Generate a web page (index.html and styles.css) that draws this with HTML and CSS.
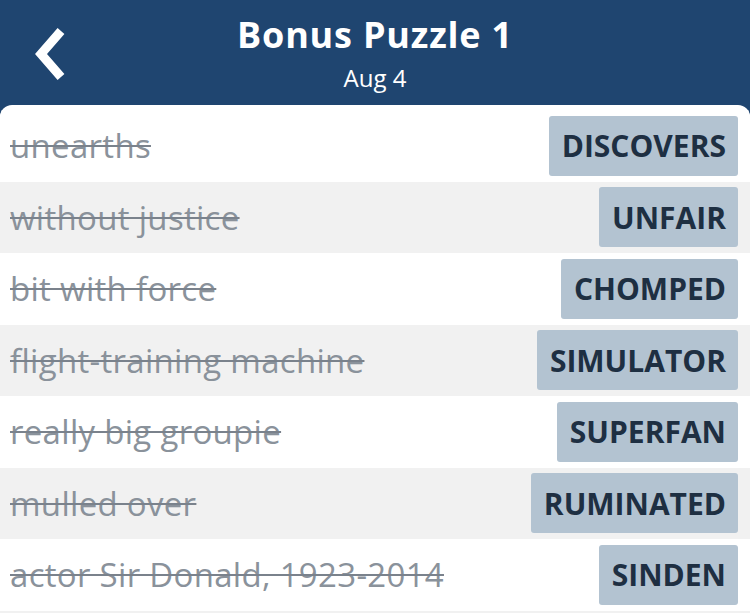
FILE: index.html
```html
<!DOCTYPE html>
<html>
<head>
<meta charset="utf-8">
<link rel="stylesheet" href="styles.css">
</head>
<body>
<div class="app">
  <header class="header">
    <div class="back">
      <svg width="40" height="56" viewBox="0 0 40 56"><polyline points="31,5 11,28 31,51" fill="none" stroke="#fff" stroke-width="9" stroke-linecap="butt" stroke-linejoin="miter"/></svg>
    </div>
    <div class="titles">
      <div class="title">Bonus Puzzle 1</div>
      <div class="subtitle">Aug 4</div>
    </div>
  </header>
  <main class="card">
    <div class="row"><span class="clue">unearths</span><span class="chip">DISCOVERS</span></div>
    <div class="row alt"><span class="clue">without justice</span><span class="chip">UNFAIR</span></div>
    <div class="row"><span class="clue">bit with force</span><span class="chip">CHOMPED</span></div>
    <div class="row alt"><span class="clue">flight-training machine</span><span class="chip">SIMULATOR</span></div>
    <div class="row"><span class="clue">really big groupie</span><span class="chip">SUPERFAN</span></div>
    <div class="row alt"><span class="clue">mulled over</span><span class="chip">RUMINATED</span></div>
    <div class="row"><span class="clue">actor Sir Donald, 1923-2014</span><span class="chip">SINDEN</span></div>
    <div class="row alt"></div>
  </main>
</div>
</body>
</html>
```
FILE: styles.css
```css
html, body {
  margin: 0;
  padding: 0;
  background: #1f4570;
  overflow: hidden;
}
.app {
  width: 750px;
  height: 613px;
  display: flex;
  flex-direction: column;
  font-family: "Open Sans", "Noto Sans", sans-serif;
}
.header {
  height: 105px;
  flex: none;
  position: relative;
  display: flex;
  justify-content: center;
  color: #fff;
}
.back {
  position: absolute;
  left: 30px;
  top: 26px;
}
.back svg { display: block; }
.titles {
  display: flex;
  flex-direction: column;
  align-items: center;
  padding-top: 11px;
}
.title {
  font-size: 36px;
  font-weight: 700;
  line-height: 48px;
  letter-spacing: 0.8px;
}
.subtitle {
  font-size: 24px;
  line-height: 30px;
  margin-top: 4px;
}
.card {
  flex: 1;
  background: #fff;
  border-radius: 12px 12px 0 0;
  padding-top: 5px;
  overflow: hidden;
}
.row {
  height: 71.5px;
  box-sizing: border-box;
  display: flex;
  align-items: center;
  justify-content: space-between;
  padding: 0 12px 0 10px;
  background: #fff;
}
.row.alt {
  background: #f1f1f1;
}
.clue {
  font-size: 33px;
  letter-spacing: 0.3px;
  color: #8a929b;
  text-decoration: line-through;
  text-decoration-thickness: 2px;
  text-decoration-color: #7a828c;
}
.chip {
  height: 60px;
  box-sizing: border-box;
  display: flex;
  align-items: center;
  padding: 0 12px 0 13px;
  background: #b3c3d1;
  border-radius: 3px;
  color: #1e2f42;
  font-size: 30px;
  font-weight: 700;
}
```
